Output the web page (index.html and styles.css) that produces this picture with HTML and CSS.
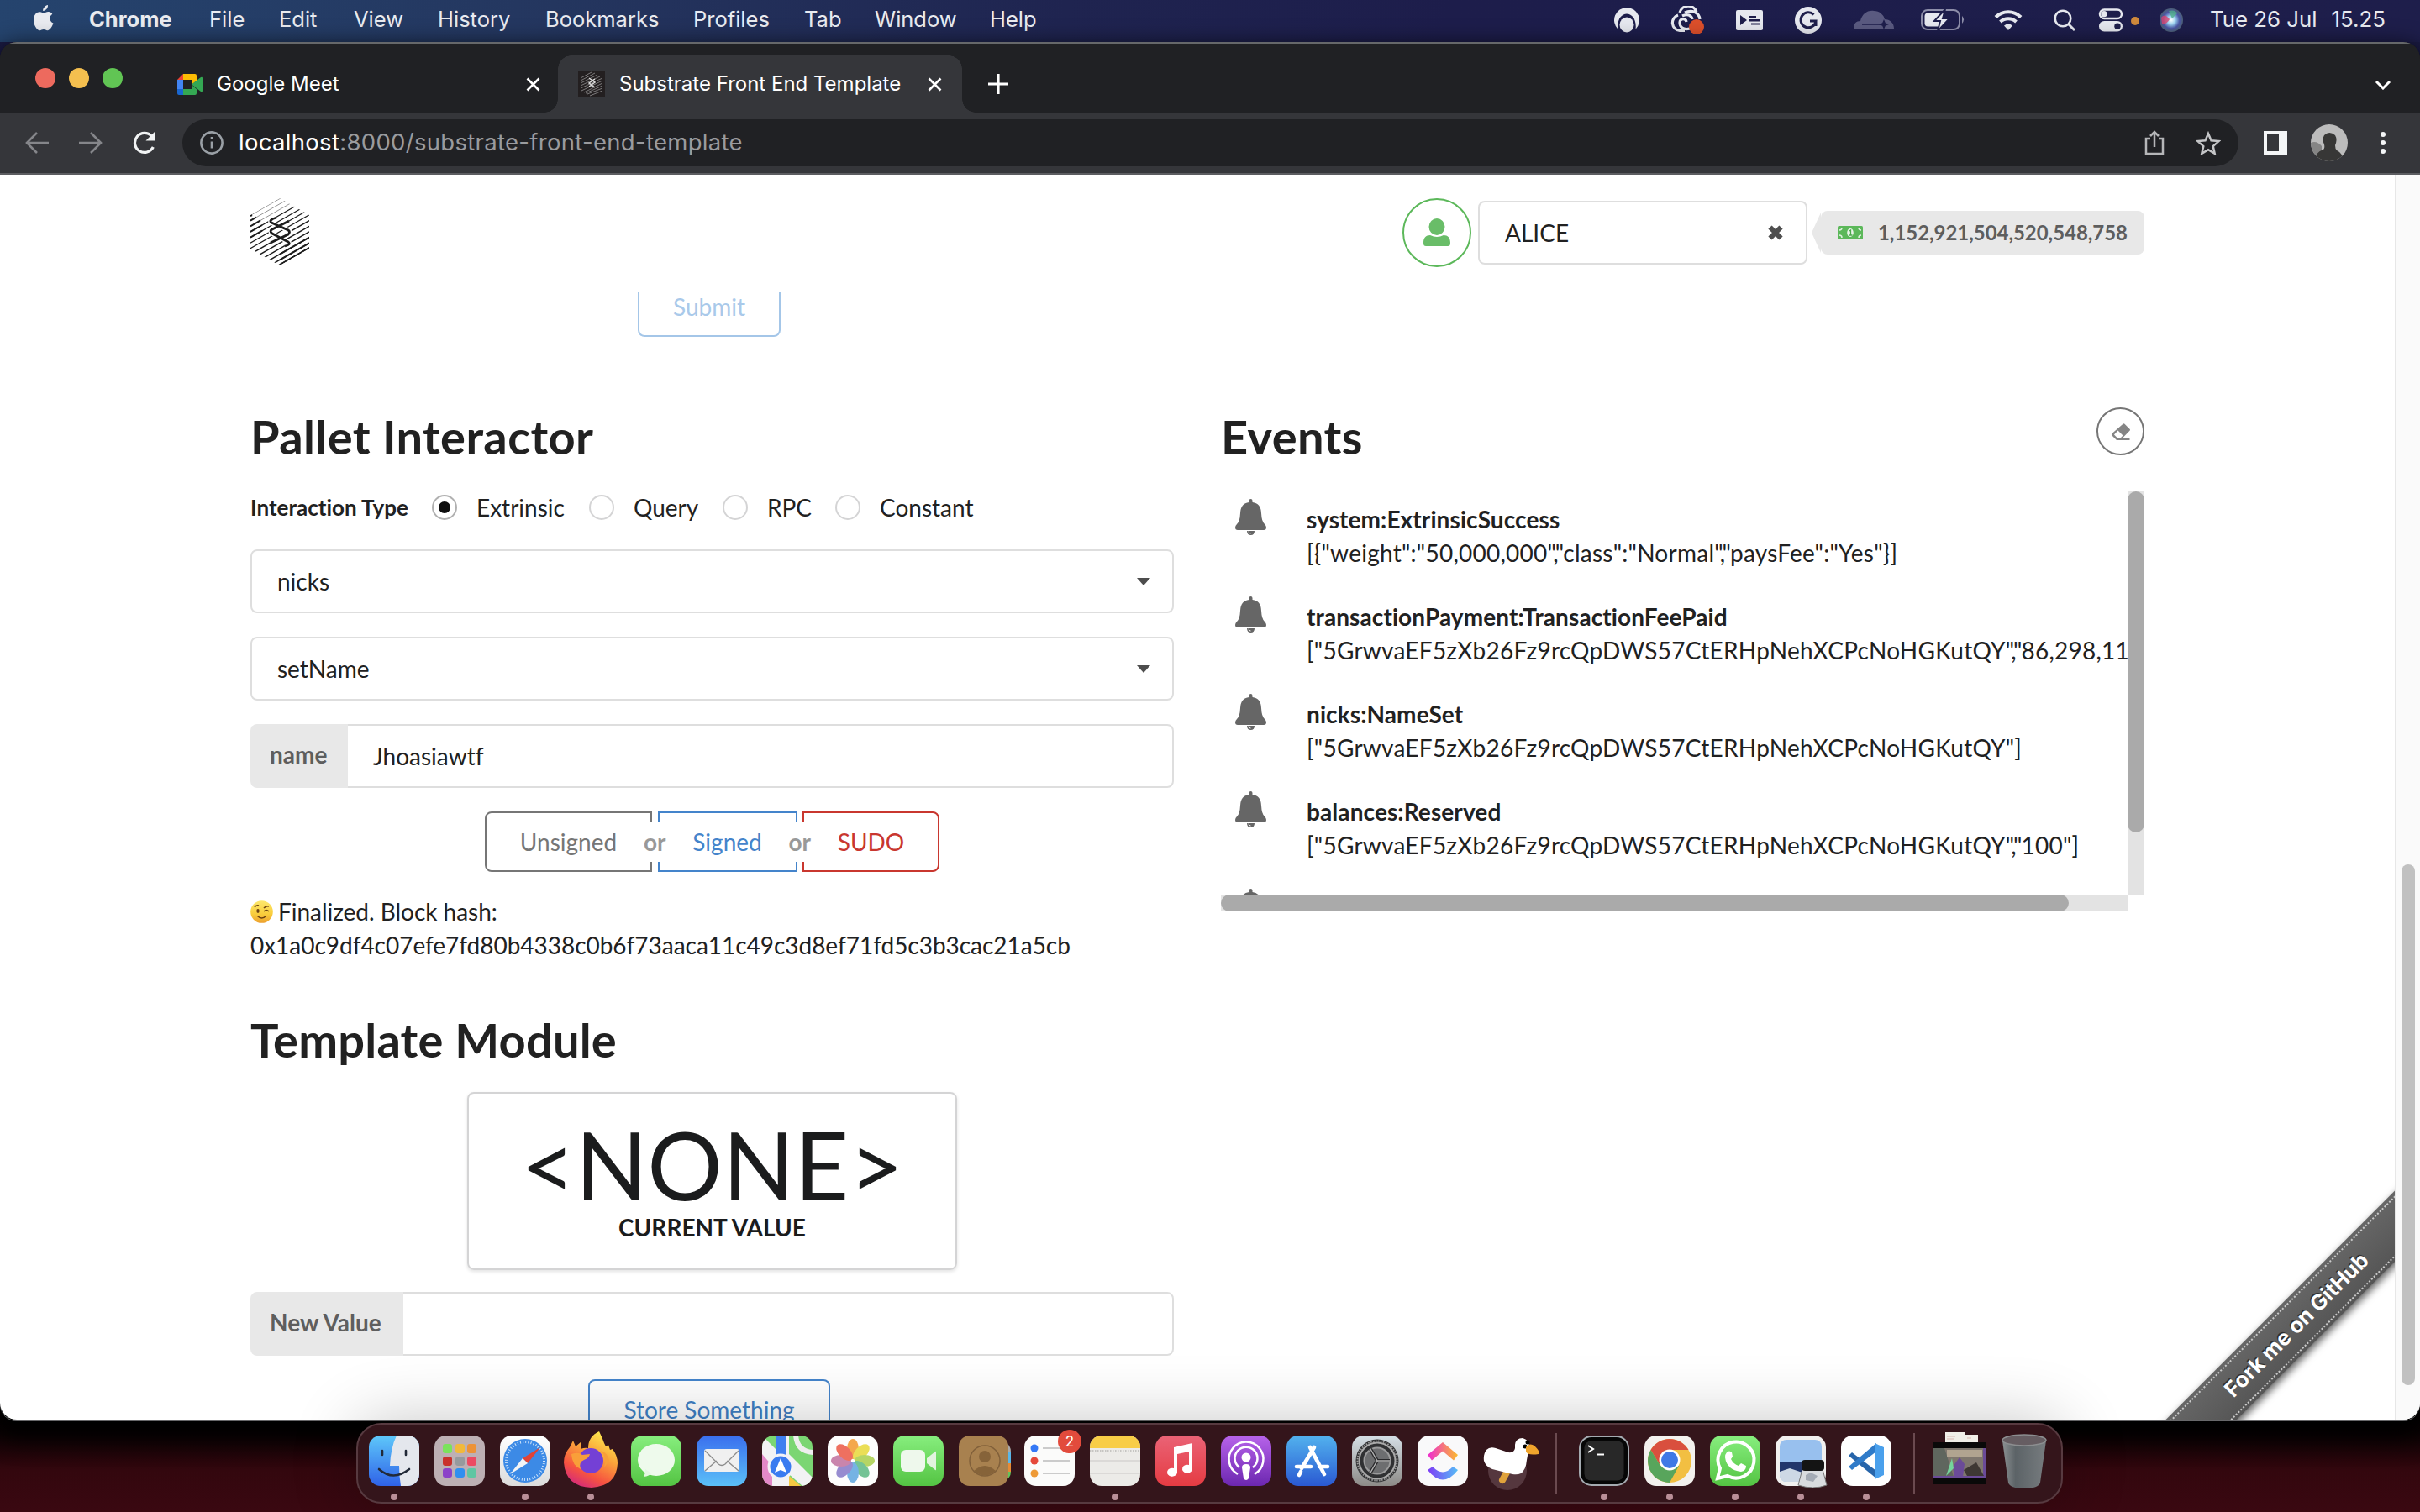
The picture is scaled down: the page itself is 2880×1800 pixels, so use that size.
FILE: index.html
```html
<!DOCTYPE html>
<html lang="en">
<head>
<meta charset="utf-8">
<title>Substrate Front End Template</title>
<link rel="stylesheet" href="styles.css">
</head>
<body>
<div class="desktop">
  <header class="menubar">
    <svg class="apple" viewBox="0 0 26 32"><path fill="#e9ebf0" d="M18 0c.3 3.400-2.500 7-5.800 6.900C11.800 3.700 15 .4 18 0zM23.300 10.700c-4.400 2.800-3.500 9 1.100 10.800-1.200 3.700-4 8.700-7 8.700-1.700 0-2.400-1.100-4.500-1.100s-2.900 1.100-4.500 1.100C4.800 30.200 1 23.500 1 17.500 1 11.400 4.900 8.200 8.500 8.200c2 0 3.600 1.300 4.800 1.300 1.200 0 3-1.500 5.500-1.400 1.800.1 3.500.9 4.500 2.600z"/></svg>
    <nav class="menus"><b>Chrome</b><span>File</span><span>Edit</span><span>View</span><span>History</span><span>Bookmarks</span><span>Profiles</span><span>Tab</span><span>Window</span><span>Help</span></nav>
    <div class="status">
      <svg width="30" height="30" viewBox="0 0 30 30"><path fill="#e6e8ef" d="M15 0A15 15 0 0 0 4.500 25.700C3 14 9 7.500 15 7.500S27 14 25.500 25.700A15 15 0 0 0 15 0z"/><ellipse cx="15" cy="20.500" rx="8.500" ry="9" fill="#e6e8ef"/></svg>
      <svg width="42" height="34" viewBox="0 0 42 34"><g fill="none" stroke="#e6e8ef" stroke-width="3.200"><path d="M18 29.500H12a9.500 9.500 0 0 1-2-18.500M12 8a10.500 10.500 0 0 1 20-1M24 27c-8 2-12-2-12-7s7-6 8-1M18 8c9-4 17 0 18 8"/><path d="M15 12c6-3 11-1 12 4"/></g><circle cx="32" cy="25" r="9" fill="#dc4f2b"/></svg>
      <svg width="32" height="24" viewBox="0 0 32 24"><rect width="32" height="24" rx="2" fill="#e6e8ef"/><path fill="#1e1e4b" d="M5 6l8 6-8 6zM16 7h8v2h-8zM16 11h12v2.500H16zM18 15.500h10v2H18z"/></svg>
      <svg width="32" height="32" viewBox="0 0 32 32"><circle cx="16" cy="16" r="16" fill="#e6e8ef"/><path d="M22.500 9.500A9 9 0 1 0 25 17h-7M25 16v7" fill="none" stroke="#1e1e4b" stroke-width="3"/></svg>
      <svg width="48" height="24" viewBox="0 0 48 24"><path fill="#5a5a80" d="M0 22c0-6 3-9 8-9C10 5 16 0 24 1c7 0 12 5 13 10 6 0 11 4 11 11z"/><path d="M10 17h24" stroke="#1e1e4b" stroke-width="1.500"/><path fill="#1e1e4b" d="M36 11l1.800 4.200L42 17l-4.200 1.800L36 23l-1.800-4.200L30 17l4.200-1.800z"/></svg>
      <svg width="52" height="26" viewBox="0 0 52 26"><rect x="1" y="1" width="45" height="23" rx="7" fill="none" stroke="#8d8ea9" stroke-width="2"/><rect x="4.500" y="4.500" width="20" height="16" rx="4" fill="#e6e8ef"/><path d="M29 0L16 14h7l-3 12 14-15h-8z" fill="#e6e8ef" stroke="#1e1e4b" stroke-width="2"/><path d="M49 8q4 4 0 9z" fill="#8d8ea9"/></svg>
      <svg width="34" height="26" viewBox="0 0 34 26"><g fill="none" stroke="#e6e8ef" stroke-width="4"><path d="M2 9.500a21 21 0 0 1 30 0M7.500 15a14 14 0 0 1 19 0"/></g><path d="M17 25l-5-5.500q5-4 10 0z" fill="#e6e8ef"/></svg>
      <svg width="26" height="26" viewBox="0 0 26 26"><circle cx="11" cy="11" r="9.300" fill="none" stroke="#e6e8ef" stroke-width="2.600"/><path d="M17.500 17.500L25 25" stroke="#e6e8ef" stroke-width="3"/></svg>
      <svg width="64" height="28" viewBox="0 0 64 28"><rect x="13" y="1.500" width="26" height="10.500" rx="5.200" fill="none" stroke="#e6e8ef" stroke-width="2.500"/><circle cx="18" cy="6.700" r="3.600" fill="#e6e8ef"/><rect x="12" y="15" width="28" height="12.500" rx="6.200" fill="#e6e8ef"/><circle cx="34" cy="21.200" r="3.700" fill="#1e1e4b"/><circle cx="55" cy="15" r="5" fill="#d08a3c"/></svg>
      <svg width="28" height="28" viewBox="0 0 28 28"><defs><radialGradient id="siri"><stop offset="0" stop-color="#fff"/><stop offset=".35" stop-color="#9cd3f1"/><stop offset=".7" stop-color="#4b56a5"/><stop offset="1" stop-color="#4c6075"/></radialGradient></defs><circle cx="14" cy="14" r="14" fill="url(#siri)"/><path d="M2 11Q6 5 12 13Q8 20 3 18z" fill="#d8456f" opacity=".8"/><path d="M11 3q8-2 10 3l-6 6z" fill="#4fae88" opacity=".8"/></svg>
    </div>
    <div class="clock"><span>Tue 26 Jul</span><span>15.25</span></div>
  </header>

  <main class="window">
    <div class="tabstrip">
      <div class="lights"><i class="red"></i><i class="amber"></i><i class="green"></i></div>
      <div class="tab tab-meet">
        <svg width="30" height="25" viewBox="0 0 30 25"><path fill="#4285f4" d="M0 7h7v11H0z"/><path fill="#ea4335" d="M0 7l7-7v7z"/><path fill="#fbbc04" d="M7 0h14q2 0 2 2v6l-6 5V7H7z"/><path fill="#34a853" d="M7 18h10v-5l6 5v5q0 2-2 2H7z"/><path fill="#1967d2" d="M0 18h7v7H2q-2 0-2-2z"/><path fill="#34a853" d="M17 12.500L28 4q2-1 2 1v15q0 2-2 1z"/></svg>
        <span class="tab-title">Google Meet</span>
        <svg class="close" width="17" height="17" viewBox="0 0 17 17"><path d="M1.500 1.500l14 14m0-14l-14 14" stroke="#fff" stroke-width="2.600"/></svg>
      </div>
      <div class="tab tab-active">
        <svg width="32" height="32" viewBox="0 0 32 32"><rect width="32" height="32" fill="#231f20"/><path stroke="#7d7b7c" stroke-width="1" d="M3 9l13-7M3 12L20 3M3 15L23 5M3 18L26 7M3 21L29 9M4 24l25-12M7 26l22-11M9 27l20-9M11 28l18-7M14 30l15-6"/><path d="M13 9l7 5-7 5m7-9l-7 5 7 5" fill="none" stroke="#ddd" stroke-width="1.500"/></svg>
        <span class="tab-title">Substrate Front End Template</span>
        <svg class="close" width="17" height="17" viewBox="0 0 17 17"><path d="M1.500 1.500l14 14m0-14l-14 14" stroke="#fff" stroke-width="2.600"/></svg>
      </div>
      <svg class="plus" width="24" height="24" viewBox="0 0 24 24"><path d="M12 0v24M0 12h24" stroke="#fff" stroke-width="3.200"/></svg>
      <svg class="chevron" width="20" height="12" viewBox="0 0 20 12"><path d="M2 2l8 8 8-8" fill="none" stroke="#fff" stroke-width="3"/></svg>
    </div>
    <div class="toolbar">
      <div class="navbtns">
        <svg width="28" height="26" viewBox="0 0 28 26"><path d="M14 1L2 13l12 12M2 13h26" fill="none" stroke="#85868a" stroke-width="2.600"/></svg>
        <svg width="28" height="26" viewBox="0 0 28 26"><path d="M14 1l12 12-12 12M26 13H0" fill="none" stroke="#85868a" stroke-width="2.600"/></svg>
        <svg width="28" height="28" viewBox="0 0 28 28"><path d="M24.300 19A11.500 11.500 0 1 1 22.500 6.200" fill="none" stroke="#f1f3f4" stroke-width="3.200"/><path d="M27 0v11.500H15.500z" fill="#f1f3f4"/></svg>
      </div>
      <div class="omnibox">
        <svg width="28" height="28" viewBox="0 0 28 28"><circle cx="14" cy="14" r="12.600" fill="none" stroke="#9aa0a6" stroke-width="2.600"/><path d="M14 12.500v8M14 7v3" stroke="#9aa0a6" stroke-width="2.600"/></svg>
        <span class="url"><em>localhost</em>:8000/substrate-front-end-template</span>
        <svg width="24" height="30" viewBox="0 0 24 30"><path d="M7 10H2v18h20V10h-5M12 20V2M7 7l5-5 5 5" fill="none" stroke="#b5b6b8" stroke-width="2.500"/></svg>
        <svg class="star" width="30" height="29" viewBox="0 0 30 29"><path d="M15 3l3.500 8.300 9 .8-6.800 6 2 8.700L15 22.200l-7.700 4.600 2-8.700-6.800-6 9-.8z" fill="none" stroke="#c4c5c7" stroke-width="2.500"/></svg>
      </div>
      <svg class="sidepanel" width="28" height="28" viewBox="0 0 28 28"><path fill="#f4f6f7" fill-rule="evenodd" d="M0 0h28v28H0zM4 4v20h14V4z"/></svg>
      <svg class="profile" width="44" height="44" viewBox="0 0 44 44"><defs><clipPath id="pc"><circle cx="22" cy="22" r="22"/></clipPath></defs><g clip-path="url(#pc)"><path fill="#bcbcbc" d="M0 0h44v44H0z"/><path fill="#858585" d="M0 22q7-3 13 4v18H0z"/><path fill="#373736" d="M5 44q0-11 10-14 2-2 1-6-3-6 0-11 6-6 13 0 3 5 0 12 0 4 2 6 7 3 8 13z"/></g></svg>
      <svg class="kebab" width="6" height="26" viewBox="0 0 6 26"><g fill="#f4f6f7"><circle cx="3" cy="3" r="3"/><circle cx="3" cy="13" r="3"/><circle cx="3" cy="23" r="3"/></g></svg>
    </div>

    <div class="viewport">
      <div class="page">
        <div class="topnav">
          <svg class="logo" width="70" height="80" viewBox="0 0 70 80"><defs><clipPath id="hex"><path d="M35 0l35 20v40L35 80 0 60V20z"/></clipPath></defs><g clip-path="url(#hex)" stroke="#1d1d1d" fill="none"><path stroke-width=".8" opacity=".6" d="M0 20.500l70-40M0 26.700l70-40M0 33.300l70-40"/><path stroke-width="1.200" d="M0 40l70-40M0 46.700l70-40M0 53.300l70-40M0 59.800l70-40"/><path stroke-width="1.500" d="M0 66.600l70-40M0 73.300l70-40M0 80l70-40M0 86.600l70-40M0 93.300l70-40M0 99l70-40"/><path stroke-width="2" d="M0 21l2-1M0 26.700l7-4M0 33.300l12-7M0 40l14-8M35 66.700l35-20M35 73.300l35-20M35 79l35-20M0 46.700l14-8"/></g><path d="M31 23q-10 3-6 6l20 9q3 2 0 5L24 53M46 27L26 37q-4 2 0 5l19 10q4 3-4 5" fill="none" stroke="#fff" stroke-width="5.500"/><path d="M31 23q-10 3-6 6l20 9q3 2 0 5L24 53M46 27L26 37q-4 2 0 5l19 10q4 3-4 5" fill="none" stroke="#1d1d1d" stroke-width="2.800"/></svg>
          <div class="account">
            <div class="avatar"><svg width="34" height="34" viewBox="0 0 34 34"><ellipse cx="17" cy="10" rx="9.500" ry="10" fill="#69bd68"/><path fill="#69bd68" d="M1 29c0-6 3-9 8-9q8 4 16 0c5 0 8 3 8 9 0 3-1 4-3 4H4c-2 0-3-1-3-4z"/></svg></div>
            <div class="select alice"><span>ALICE</span><svg width="20" height="20" viewBox="0 0 20 20"><path d="M3.500 3.500l13 13m0-13l-13 13" stroke="#4f4f4f" stroke-width="6"/></svg></div>
            <div class="pointer"></div>
            <div class="balance"><svg width="30" height="16" viewBox="0 0 30 16"><rect width="30" height="16" rx="1.500" fill="#5cb85a"/><path d="M2 5q3 0 3-3M25 2q0 3 3 3M2 11q3 0 3 3M25 14q0-3 3-3" fill="none" stroke="#dff0df" stroke-width="1.500"/><ellipse cx="15" cy="8" rx="3.800" ry="5" fill="#e8f4e8"/><path d="M14 6l1.500-1v6M13.500 11h4" stroke="#4aa84a" stroke-width="1.300" fill="none"/></svg><span>1,152,921,504,520,548,758</span></div>
          </div>
        </div>
        <div class="content">
          <section class="left">
            <div class="btn submit">Submit</div>
            <h1>Pallet Interactor</h1>
            <div class="radios"><b>Interaction Type</b>
              <label class="on"><i></i>Extrinsic</label><label class="r2"><i></i>Query</label><label class="r3"><i></i>RPC</label><label class="r4"><i></i>Constant</label></div>
            <div class="select"><span>nicks</span><svg width="16" height="9" viewBox="0 0 16 9"><path d="M0 0h16L8 9z" fill="#4d4d4d"/></svg></div>
            <div class="select"><span>setName</span><svg width="16" height="9" viewBox="0 0 16 9"><path d="M0 0h16L8 9z" fill="#4d4d4d"/></svg></div>
            <div class="field"><div class="field-label name-label">name</div><div class="field-value">Jhoasiawtf</div></div>
            <div class="actions"><div class="act unsigned">Unsigned</div><div class="or"><span>or</span></div><div class="act signed">Signed</div><div class="or"><span>or</span></div><div class="act sudo">SUDO</div></div>
            <div class="result"><div class="line"><svg width="27" height="27" viewBox="0 0 27 27"><defs><linearGradient id="em" x2="0" y2="1"><stop offset="0" stop-color="#fde86d"/><stop offset=".6" stop-color="#f9cd3c"/><stop offset="1" stop-color="#ec9f2d"/></linearGradient></defs><circle cx="13.500" cy="13.500" r="13.300" fill="url(#em)"/><ellipse cx="9" cy="12.500" rx="1.700" ry="2.400" fill="#6b4212"/><path d="M5 8q2-3 5-2M16 13q3-3 6 0M16 9q3-3 6-2M8.500 18.500q5 5 10 0" fill="none" stroke="#6b4212" stroke-width="1.600"/></svg><span>Finalized. Block hash:</span></div><div class="line">0x1a0c9df4c07efe7fd80b4338c0b6f73aaca11c49c3d8ef71fd5c3b3cac21a5cb</div></div>
            <h1 class="template">Template Module</h1>
            <div class="card"><div class="value">&lt;NONE&gt;</div><div class="caption">CURRENT VALUE</div></div>
            <div class="field"><div class="field-label new-label">New Value</div><div class="field-value"></div></div>
            <div class="btn store">Store Something</div>
          </section>
          <section class="right">
            <div class="events-head"><h1>Events</h1><div class="erase"><svg width="24" height="20" viewBox="0 0 24 20"><path fill="#858585" d="M14.500.8q1-1 2 0l6 6q1 1 0 2L14 17.500h8.500V20H7l-5.500-5.500q-1.200-1.200 0-2.500z"/><path fill="#fff" d="M8.500 8.500l6 6-3 3H8l-4-4z"/></svg></div></div>
            <div class="feed">
              <div class="feed-list">
                <div class="event"><svg class="bell" viewBox="0 0 37 43"><path d="M18.500 0q2 0 2 2v2q10 1 10.500 13 .5 10 4 13 2 2 2 4 0 3-3 3H3q-3 0-3-3 0-2 2-4 3.500-3 4-13Q6.500 5 16.500 4V2q0-2 2-2zM14 38h9q0 5-4.500 5T14 38z" fill="#666"/><path d="M16 38.500q0 2.500 2.500 2.500" stroke="#fff" fill="none"/></svg><div><b>system:ExtrinsicSuccess</b><p>[{"weight":"50,000,000<span class="tight">","</span>class":"Normal<span class="tight">","</span>paysFee":"Yes"}]</p></div></div>
                <div class="event"><svg class="bell" viewBox="0 0 37 43"><path d="M18.500 0q2 0 2 2v2q10 1 10.500 13 .5 10 4 13 2 2 2 4 0 3-3 3H3q-3 0-3-3 0-2 2-4 3.500-3 4-13Q6.500 5 16.500 4V2q0-2 2-2zM14 38h9q0 5-4.500 5T14 38z" fill="#666"/><path d="M16 38.500q0 2.500 2.500 2.500" stroke="#fff" fill="none"/></svg><div><b>transactionPayment:TransactionFeePaid</b><p>["5GrwvaEF5zXb26Fz9rcQpDWS57CtERHpNehXCPcNoHGKutQY<span class="tight">","</span>86,298,11</p></div></div>
                <div class="event"><svg class="bell" viewBox="0 0 37 43"><path d="M18.500 0q2 0 2 2v2q10 1 10.500 13 .5 10 4 13 2 2 2 4 0 3-3 3H3q-3 0-3-3 0-2 2-4 3.500-3 4-13Q6.500 5 16.500 4V2q0-2 2-2zM14 38h9q0 5-4.500 5T14 38z" fill="#666"/><path d="M16 38.500q0 2.500 2.500 2.500" stroke="#fff" fill="none"/></svg><div><b>nicks:NameSet</b><p>["5GrwvaEF5zXb26Fz9rcQpDWS57CtERHpNehXCPcNoHGKutQY"]</p></div></div>
                <div class="event"><svg class="bell" viewBox="0 0 37 43"><path d="M18.500 0q2 0 2 2v2q10 1 10.500 13 .5 10 4 13 2 2 2 4 0 3-3 3H3q-3 0-3-3 0-2 2-4 3.500-3 4-13Q6.500 5 16.500 4V2q0-2 2-2zM14 38h9q0 5-4.500 5T14 38z" fill="#666"/><path d="M16 38.500q0 2.500 2.500 2.500" stroke="#fff" fill="none"/></svg><div><b>balances:Reserved</b><p>["5GrwvaEF5zXb26Fz9rcQpDWS57CtERHpNehXCPcNoHGKutQY<span class="tight">","</span>100"]</p></div></div>
                <div class="event"><svg class="bell" viewBox="0 0 37 43"><path d="M18.500 0q2 0 2 2v2q10 1 10.500 13H6Q6.500 5 16.500 4V2q0-2 2-2z" fill="#666"/></svg></div>
              </div>
              <div class="vbar"><i></i></div>
              <div class="hbar"><i></i></div>
            </div>
          </section>
        </div>
        <div class="ribbon"><span>Fork me on GitHub</span></div>
      </div>
      <div class="pagebar"><i></i></div>
    </div>
  </main>

  <footer class="dock">
    <div class="app run"><svg viewBox="0 0 60 60"><defs><linearGradient id="fb" x2="0" y2="1"><stop offset="0" stop-color="#5ec8fa"/><stop offset="1" stop-color="#2f62e8"/></linearGradient><linearGradient id="wg" x2="0" y2="1"><stop offset="0" stop-color="#fff"/><stop offset="1" stop-color="#dcdcdc"/></linearGradient><clipPath id="sq"><rect width="60" height="60" rx="14"/></clipPath></defs><g clip-path="url(#sq)"><path fill="url(#fb)" d="M0 0h60v60H0z"/><path fill="#e4e7ed" d="M33 0h27v60H38q-2-12-2-24h-11Q26 14 33 0z"/></g><path d="M16 18v5M44 18v5M12 40q17 15 36 0" stroke="#222a38" stroke-width="2.600" fill="none" stroke-linecap="round"/></svg></div>
    <div class="app"><svg viewBox="0 0 60 60"><rect width="60" height="60" rx="14" fill="#bdb0b4"/><rect x="10" y="10" width="11" height="11" rx="3" fill="#7be35b"/><rect x="25" y="10" width="11" height="11" rx="3" fill="#f2b93b"/><rect x="39" y="10" width="11" height="11" rx="3" fill="#ed9237"/><rect x="10" y="25" width="11" height="11" rx="3" fill="#c9312b"/><rect x="25" y="25" width="11" height="11" rx="3" fill="#969a9d"/><rect x="39" y="25" width="11" height="11" rx="3" fill="#ec4a62"/><rect x="10" y="39" width="11" height="11" rx="3" fill="#8c42c8"/><rect x="25" y="39" width="11" height="11" rx="3" fill="#2f8ff0"/><rect x="39" y="39" width="11" height="11" rx="3" fill="#5fc6a2"/></svg></div>
    <div class="app run"><svg viewBox="0 0 60 60"><rect width="60" height="60" rx="14" fill="url(#wg)"/><circle cx="30" cy="30" r="26" fill="#3c8ae6"/><circle cx="30" cy="30" r="22.500" fill="none" stroke="#cfe4fa" stroke-width="3" stroke-dasharray="1 2.200"/><path fill="#e04337" d="M48 14L27 27l6 6z"/><path fill="#f3f4f6" d="M12 46l21-13-6-6z"/></svg></div>
    <div class="app run"><svg viewBox="0 0 60 60"><defs><linearGradient id="ff" x1=".8" y1="0" x2=".3" y2="1"><stop offset="0" stop-color="#fdf251"/><stop offset=".4" stop-color="#fba33a"/><stop offset=".75" stop-color="#f65340"/><stop offset="1" stop-color="#d52a7a"/></linearGradient></defs><path fill="url(#ff)" d="M40-5q4 8 6 14l2 4 3-2 2 6 3-1q6 8 6 17-1 27-31 29Q0 61-2 32-2 22 5 14L9 6l3 7 6-5v8q5-2 9-1 0-14 13-20z"/><circle cx="30" cy="30" r="15" fill="#7440d5"/><path fill="#f99f39" d="M7 22q9-3 13 1l9-1q-1 5-7 7-7 3-4 11-10-4-11-18zM42 18q8 8 4 20l6-8q-2-10-10-12z"/></svg></div>
    <div class="app"><svg viewBox="0 0 60 60"><defs><linearGradient id="gr" x2="0" y2="1"><stop offset="0" stop-color="#87ee7e"/><stop offset="1" stop-color="#54c443"/></linearGradient></defs><rect width="60" height="60" rx="14" fill="url(#gr)"/><ellipse cx="30" cy="29" rx="22" ry="19" fill="#eefaec"/><path fill="#e5f6e2" d="M17 40q0 6-2 9 7-1 9-4z"/></svg></div>
    <div class="app"><svg viewBox="0 0 60 60"><defs><linearGradient id="ml" x2="0" y2="1"><stop offset="0" stop-color="#3a6fee"/><stop offset="1" stop-color="#5bc0f8"/></linearGradient></defs><rect width="60" height="60" rx="14" fill="url(#ml)"/><rect x="9" y="16" width="42" height="27" rx="3" fill="#f0f0f0"/><path d="M10 18l16 16q4 3 8 0l16-16M10 42l14-12M50 42L36 30" stroke="#8c8c8c" stroke-width="1.400" fill="none"/></svg></div>
    <div class="app"><svg viewBox="0 0 60 60"><g clip-path="url(#sq)"><path fill="#7bd673" d="M0 0h60v60H0z"/><path fill="#e289c8" d="M0 14l16 20v26H0z"/><path fill="#f2f2f4" d="M0 0l16 16V0h16v22l28 28v10H48L32 46v14H12V36L0 22z"/><path fill="#f5c944" d="M32 60V48l14 12z"/><path fill="#3f7ff0" d="M17 0h12v30H17z"/><path d="M40 0q2 20 22 20" fill="none" stroke="#eee" stroke-width="6"/></g><circle cx="22" cy="37" r="14" fill="#3a7bf0" stroke="#f2f2f6" stroke-width="3"/><path fill="#fff" d="M22 27l7 17-7-3-7 3z"/></svg></div>
    <div class="app"><svg viewBox="0 0 60 60"><rect width="60" height="60" rx="14" fill="#fdfdfd"/><g opacity=".85"><ellipse cx="30" cy="16" rx="7" ry="12" fill="#f39a2f"/><ellipse cx="30" cy="16" rx="7" ry="12" fill="#e8d93a" transform="rotate(45 30 30)"/><ellipse cx="30" cy="16" rx="7" ry="12" fill="#a9cf4b" transform="rotate(90 30 30)"/><ellipse cx="30" cy="16" rx="7" ry="12" fill="#5dba85" transform="rotate(135 30 30)"/><ellipse cx="30" cy="16" rx="7" ry="12" fill="#5ea7e0" transform="rotate(180 30 30)"/><ellipse cx="30" cy="16" rx="7" ry="12" fill="#8579c9" transform="rotate(225 30 30)"/><ellipse cx="30" cy="16" rx="7" ry="12" fill="#c1719f" transform="rotate(270 30 30)"/><ellipse cx="30" cy="16" rx="7" ry="12" fill="#ec5845" transform="rotate(315 30 30)"/></g></svg></div>
    <div class="app"><svg viewBox="0 0 60 60"><rect width="60" height="60" rx="14" fill="url(#gr)"/><rect x="9" y="17" width="29" height="26" rx="6" fill="#eef8ec"/><path fill="#e2f3df" d="M40 27l10-8q1-1 1 1v20q0 2-1 1l-10-8z"/></svg></div>
    <div class="app"><svg viewBox="0 0 60 60"><path fill="#5ab7e8" d="M54 20h8v13h-8z"/><path fill="#e88b35" d="M54 33h8v10h-8z"/><path fill="#63c55b" d="M54 43h8q0 8-8 10z"/><path fill="#aaa" d="M54 8q8 2 8 12h-8z"/><rect width="59" height="60" rx="13" fill="#a8814f"/><circle cx="31" cy="30" r="18" fill="none" stroke="#81603a" stroke-width="1.500"/><circle cx="31" cy="25" r="7" fill="#866339"/><path d="M18 42q13-12 26 0-13 11-26 0z" fill="#866339"/></svg></div>
    <div class="app"><svg viewBox="0 0 60 60"><rect width="60" height="60" rx="14" fill="#fbfbfa"/><path d="M22 15h32M22 30h32M22 45h32" stroke="#bcbcbc" stroke-width="1.500"/><circle cx="12" cy="15" r="4.500" fill="#3478f6"/><circle cx="12" cy="30" r="4.500" fill="#e5483a"/><circle cx="12" cy="45" r="4.500" fill="#ee9a37"/></svg><span class="badge">2</span></div>
    <div class="app run"><svg viewBox="0 0 60 60"><g clip-path="url(#sq)"><path fill="#ecebe8" d="M0 0h60v60H0z"/><path fill="#f8cd46" d="M0 0h60v15H0z"/></g><path d="M0 18h60" stroke="#b9b9b5" stroke-width="1.500" stroke-dasharray="1.500 1.500"/><path d="M0 30h60M0 45h60" stroke="#d5d4d1" stroke-width="1.500"/></svg></div>
    <div class="app"><svg viewBox="0 0 60 60"><defs><linearGradient id="mu" x2="0" y2="1"><stop offset="0" stop-color="#ea6376"/><stop offset="1" stop-color="#e53b42"/></linearGradient></defs><rect width="60" height="60" rx="14" fill="url(#mu)"/><path d="M22 14l22-5v31a6 5 0 1 1-4-5V19l-14 3v22a6 5 0 1 1-4-5z" fill="#fff"/></svg></div>
    <div class="app"><svg viewBox="0 0 60 60"><defs><linearGradient id="po" x2="0" y2="1"><stop offset="0" stop-color="#b763ea"/><stop offset="1" stop-color="#6c27b0"/></linearGradient></defs><rect width="60" height="60" rx="14" fill="url(#po)"/><g fill="none" stroke="#fff" stroke-width="2.500"><path d="M20 46a20.500 20.500 0 1 1 20 0M22 38a13.500 13.500 0 1 1 16 0"/></g><circle cx="30" cy="26" r="5.500" fill="#fff"/><path fill="#fff" d="M25 38q0-4 5-4t5 4l-2 13q-3 4-6 0z"/></svg></div>
    <div class="app"><svg viewBox="0 0 60 60"><defs><linearGradient id="as" x2="0" y2="1"><stop offset="0" stop-color="#52b2ee"/><stop offset="1" stop-color="#2a59d2"/></linearGradient></defs><rect width="60" height="60" rx="14" fill="url(#as)"/><path d="M33 14L18 39M28 14l17 32M12 37h17M39 37h10M17 43l-2 4" stroke="#fff" stroke-width="4.600" stroke-linecap="round"/></svg></div>
    <div class="app"><svg viewBox="0 0 60 60"><defs><linearGradient id="st" x2="0" y2="1"><stop offset="0" stop-color="#d5dfe6"/><stop offset="1" stop-color="#8d8b88"/></linearGradient></defs><rect width="60" height="60" rx="14" fill="url(#st)"/><circle cx="30" cy="30" r="25.500" fill="#303133"/><circle cx="30" cy="30" r="21.500" fill="none" stroke="#aaa" stroke-width="2"/><circle cx="30" cy="30" r="23.500" fill="none" stroke="#999" stroke-width="2" stroke-dasharray="1.500 1.500"/><circle cx="30" cy="30" r="15.500" fill="#6d6e70" stroke="#9b9b9c" stroke-width="2"/><path d="M30 30h15M30 30l-8-14M30 30l-8 14" stroke="#29292b" stroke-width="4"/><path d="M30 30h15M30 30l-8-14M30 30l-8 14" stroke="#b1b1b2" stroke-width="1.500"/></svg></div>
    <div class="app"><svg viewBox="0 0 60 60"><defs><linearGradient id="c1"><stop offset="0" stop-color="#ee2bd2"/><stop offset="1" stop-color="#fbbc2d"/></linearGradient><linearGradient id="c2"><stop offset="0" stop-color="#7e3bf5"/><stop offset="1" stop-color="#55bef7"/></linearGradient></defs><rect width="60" height="60" rx="14" fill="#f9f9fa"/><path fill="url(#c1)" d="M30 8l18 15-5 6.500-13-11-13 11L12 23z"/><path fill="url(#c2)" d="M12 41l6-4q12 13 24 0l6 4q-18 23-36 0z"/></svg></div>
    <div class="app"><svg viewBox="0 0 60 60"><circle cx="29" cy="42" r="23" fill="#55373e"/><path d="M28 44l-5 9" stroke="#e0a23b" stroke-width="8" stroke-linecap="round"/><path fill="#fff" d="M1 30Q0 22 4 17q4-4 11-2l15 5q7 1 8-5V11q1-8 9-8 8 2 8 10l-3 16q-1 12-7 16-4 2-10 1L11 40Q3 37 1 30z"/><circle cx="53" cy="8" r="2.500"/><circle cx="50" cy="13" r="2.500"/><path fill="#f0a42c" d="M51 14q4-6 10-2 8 8 5 10-13 2-15-3z"/></svg></div>
    <div class="sep"></div>
    <div class="app run"><svg viewBox="0 0 60 60"><rect x="1" y="1" width="58" height="58" rx="14" fill="#060606" stroke="#a4aab0" stroke-width="2"/><rect x="6.500" y="6.500" width="47" height="47" rx="8" fill="#282828"/><path d="M11 12l6 4-6 4M21 22.500h9" stroke="#fff" stroke-width="2" fill="none"/></svg></div>
    <div class="app run"><svg viewBox="0 0 60 60"><rect width="60" height="60" rx="14" fill="#f3f1ee"/><circle cx="30" cy="30" r="26" fill="#f2bf42"/><path fill="#d94f3e" d="M7.500 17A26 26 0 0 1 52.500 17H30L19 36z"/><path fill="#58a55c" d="M7.500 17A26 26 0 0 0 30 56l11-20H19z"/><circle cx="30" cy="29" r="12.500" fill="#fff"/><circle cx="30" cy="29" r="10" fill="#3f78e6"/></svg></div>
    <div class="app run"><svg viewBox="0 0 60 60"><rect width="60" height="60" rx="14" fill="url(#gr)"/><path d="M9 51l3-12A21.500 21.500 0 1 1 21 48z" fill="none" stroke="#fff" stroke-width="4"/><path d="M20 20q3-3 6 0l1 5-2 3q3 6 9 8l3-3 6 3q0 6-6 7-17-2-19-17 0-4 2-6z" fill="#fff"/></svg></div>
    <div class="app run"><svg viewBox="0 0 60 60"><rect width="60" height="60" rx="14" fill="#f1f0ef"/><rect x="5" y="5" width="50" height="50" rx="8" fill="#98c0ee"/><path fill="#22366b" d="M5 32h50v12H5z"/><path fill="#cdd8e5" d="M5 43l12-4 18 6v10H13q-8 0-8-8z"/><path fill="#d9dcdf" stroke="#777" d="M32 40h24l5 19q-16 6-34 0z"/><rect x="31" y="29" width="27" height="13" rx="4" fill="#141414"/><path fill="#a4abb5" d="M36 47l6-3 8 4-5 7-9-2z"/></svg></div>
    <div class="app run"><svg viewBox="0 0 60 60"><rect width="60" height="60" rx="14" fill="#fff"/><path fill="#2765aa" d="M9 24l4-4 29 22v9L9 24z"/><path fill="#2f7bc9" d="M9 37l4 4 29-22V9z"/><path fill="#4aa0ec" d="M40 9l11 5v33l-11 5z"/></svg></div>
    <div class="sep"></div>
    <div class="app mini"><svg viewBox="0 0 63 62"><path fill="#f1efe8" d="M14 0h23v3h16v12H14z"/><path stroke="#d9b9b2" d="M16 5h10M16 8h8M40 7h5"/><path fill="#090909" d="M0 12h63v50H0z"/><path fill="#7f776e" d="M0 19h63v34H0z"/><path fill="#5f665e" d="M0 19h13l11 34H0z"/><path fill="#b1a490" d="M16 21h42v9H16z"/><path fill="#6b4b98" d="M23 41l8-11 6 8-2 15H25zM59 19h4v35H0v-2h59z"/><path fill="#75d49c" d="M15 52l7-21 2 12z"/><path fill="#3e3834" d="M36 45l15-9 9 16H40z"/></svg></div>
    <div class="app trash"><svg viewBox="0 0 54 66"><defs><linearGradient id="tr"><stop offset="0" stop-color="#8b9092"/><stop offset=".3" stop-color="#5c6367"/><stop offset="1" stop-color="#777c7f"/></linearGradient></defs><path fill="url(#tr)" d="M1 8l7 50q2 7 19 7t19-7l7-50z"/><ellipse cx="27" cy="7.500" rx="26" ry="6.500" fill="#665d62" stroke="#8c8e90" stroke-width="1.500"/></svg></div>
  </footer>
</div>
</body>
</html>
```
FILE: styles.css
```css
* { box-sizing: border-box; }
html, body { margin: 0; width: 2880px; height: 1800px; overflow: hidden; }
svg { display: block; flex: none; }
h1, p { margin: 0; }
i { font-style: normal; }

.desktop {
  width: 2880px; height: 1800px;
  display: flex; flex-direction: column;
  overflow: hidden;
  background: linear-gradient(#14142e 0, #1c1c48 60px, #050102 1690px, #0b0203 1706px, #33070e 1750px, #3a0811 1800px);
  font-family: Inter, "Liberation Sans", sans-serif;
}

/* menu bar */
.menubar {
  flex: 0 0 50px; height: 50px;
  display: flex; align-items: center;
  padding: 0 0 2px 39px;
  color: #e9ebf0; font-size: 25.500px;
  background: linear-gradient(100deg, #25446e 0, #24365f 650px, #1f2450 1250px, #1d1d4b 1700px, #1e1e4b 100%);
  white-space: pre;
}
.apple { width: 26px; height: 32px; margin-top: -4px; }
.menus { display: grid; grid-template-columns: 143px 83px 89px 100px 128px 176px 132px 84px 137px 80px; margin: -3px 0 0 41px; flex: none; }
.status { display: grid; grid-template-columns: 72px 72px 76px 64px 92px 72px 84px 50px 72px 60px; justify-items: center; align-items: center; margin-left: 642px; flex: none; }
.clock { display: flex; gap: 17px; margin: -3px 0 0 16px; font-size: 25.800px; }

/* browser chrome */
.window {
  flex: 0 0 1640px; height: 1640px;
  display: flex; flex-direction: column;
  border-radius: 20px; overflow: hidden;
  box-shadow: 0 1px 0 #000, 0 2px 0 #68686a, 0 4px 0 #000, 0 14px 30px 6px #000;
  background: #202124;
}
.tabstrip { flex: 0 0 84px; display: flex; background: #202124; border-top: 2px solid #66686a; padding-left: 42px; }
.lights { display: flex; gap: 16px; padding-top: 29px; width: 169px; }
.lights i { width: 24px; height: 24px; border-radius: 50%; }
.red { background: #ed6a5e; } .amber { background: #f4bf4f; } .green { background: #61c554; }
.tab { display: flex; align-items: center; height: 68px; margin-top: 14px; color: #fff; font-size: 24px; white-space: nowrap; }
.tab-title { margin-left: 17px; margin-top: -2px; }
.close { margin-left: auto; }
.tab-meet { width: 432px; }
.tab-active {
  width: 513px; margin-left: 5px; padding: 0 40px;
  background:
    radial-gradient(circle at 0 0, transparent 15.5px, #35363a 16px) left bottom / 16px 16px no-repeat,
    radial-gradient(circle at 100% 0, transparent 15.5px, #35363a 16px) right bottom / 16px 16px no-repeat,
    radial-gradient(circle at 16px 16px, #35363a 15.5px, transparent 16px) 16px 0 / 16px 16px no-repeat,
    radial-gradient(circle at 0 16px, #35363a 15.5px, transparent 16px) 481px 0 / 16px 16px no-repeat,
    linear-gradient(#35363a, #35363a) 32px 0 / 449px 16px no-repeat,
    linear-gradient(#35363a, #35363a) 16px 16px / 481px 52px no-repeat;
}
.plus { margin: 36px 0 0 15px; }
.chevron { margin: 43px 34px 0 auto; }
.toolbar { flex: 0 0 74px; display: flex; align-items: center; background: #35363a; border-bottom: 2px solid #5c5d61; padding-left: 30px; }
.navbtns { display: flex; align-items: center; gap: 36px; width: 187px; }
.omnibox { width: 2447px; height: 56px; border-radius: 28px; background: #202124; display: flex; align-items: center; padding: 0 21px; }
.url { color: #9a9b9e; font-size: 27.500px; letter-spacing: .3px; margin: -2px auto 0 18px; }
.url em { color: #fff; font-style: normal; }
.star { margin-left: 37px; }
.sidepanel { margin-left: 30px; }
.profile { margin-left: 28px; }
.kebab { margin-left: 39px; }

/* web page */
.viewport { flex: 1; display: flex; min-height: 0; background: #fff; }
.page { width: 2850px; position: relative; overflow: hidden; font: 28px/40px Lato, "Liberation Sans", sans-serif; font-variant-ligatures: none; color: #212121; }
.topnav { height: 140px; display: flex; justify-content: space-between; padding: 28px 298px 0 298px; }
.account { display: flex; align-items: center; height: 82px; }
.avatar { width: 82px; height: 82px; border: 2px solid #5cb85a; border-radius: 50%; display: flex; align-items: center; justify-content: center; }
.select { height: 76px; margin-bottom: 28px; border: 2px solid #dedede; border-radius: 8px; display: flex; align-items: center; justify-content: space-between; padding: 0 26px 0 30px; }
.alice { width: 392px; margin: 0 0 0 8px; }
.pointer { border: 11px solid transparent; border-right-color: #e8e8e8; border-left: 0; margin-left: 5px; border-width: 24px 11px 24px 0; }
.balance { width: 385px; height: 52px; border-radius: 8px; background: #e8e8e8; color: #5e5e5e; font-weight: 700; font-size: 24px; letter-spacing: -.05px; display: flex; align-items: center; gap: 18px; padding-left: 20px; white-space: nowrap; }
.content { display: grid; grid-template-columns: 1099px 1099px; column-gap: 56px; padding-left: 298px; height: 1342px; overflow: hidden; align-items: start; }
h1 { font-size: 56px; line-height: 72px; font-weight: 700; letter-spacing: .4px; }
.btn { display: flex; align-items: center; justify-content: center; height: 72px; border: 2px solid #4484cb; border-radius: 8px; color: #3f7fc4; }
.submit { width: 170px; margin: -19px 0 83px 461px; color: #a9c9ea; border-color: #a4c6e8; }
.radios { display: flex; align-items: center; height: 40px; margin: 28px 0 30px; }
.radios b { font-size: 26px; width: 216px; flex: none; }
.radios label { display: flex; align-items: center; gap: 23px; width: 187px; }
.radios .r2 { width: 159px; } .radios .r3 { width: 134px; } .radios .r4 { width: 170px; }
.radios i { width: 30px; height: 30px; flex: none; border: 2px solid #d4d4d5; border-radius: 50%; display: flex; align-items: center; justify-content: center; }
.radios .on i { border-color: #b0b0b0; }
.radios .on i::before { content: ""; width: 14px; height: 14px; border-radius: 50%; background: #0d0d0d; }
.field { display: flex; height: 76px; margin-bottom: 28px; }
.field-label { background: #e8e8e8; border-radius: 8px 0 0 8px; color: #5e5e5e; font-weight: 700; padding: 16px 0 0 23px; }
.name-label { width: 116px; } .new-label { width: 182px; }
.field-value { flex: 1; border: 2px solid #dedede; border-left: 0; border-radius: 0 8px 8px 0; padding: 16px 0 0 30px; }
.actions { display: flex; height: 72px; margin-left: 279px; }
.act { border: 2px solid #767676; display: flex; align-items: center; justify-content: center; color: #767676; flex: none; }
.unsigned { width: 199px; border-radius: 8px 0 0 8px; }
.signed { width: 166px; border-color: #4484cb; color: #4484cb; }
.sudo { width: 163px; border-color: #c9372f; color: #c9372f; border-radius: 0 8px 8px 0; }
.or { flex: 0 0 6.500px; min-width: 0; display: flex; align-items: center; justify-content: center; z-index: 1; }
.or span { flex: none; width: 40px; height: 48px; line-height: 48px; text-align: center; background: #fff; color: #999; font-weight: 700; }
.result { margin-top: 27px; }
.line { display: flex; align-items: center; gap: 6px; height: 40px; letter-spacing: -.03px; }
.template { margin-top: 57px; letter-spacing: .2px; }
.card { width: 583px; height: 212px; margin: 26px auto; border: 2px solid #d4d4d5; border-radius: 8px; box-shadow: 0 2px 4px #e3e3e3; text-align: center; padding-top: 28px; color: #1b1c1d; }
.value { font-size: 112px; line-height: 112px; }
.caption { font-weight: 700; line-height: 38px; }
.store { width: 288px; margin-left: 402px; }

.right { padding-top: 136px; }
.events-head { display: flex; justify-content: space-between; height: 101px; }
.erase { width: 57px; height: 57px; margin-top: 1px; border: 2px solid #767676; border-radius: 50%; display: flex; align-items: center; justify-content: center; }
.feed { display: grid; grid-template: 480px 20px / 1079px 20px; }
.feed-list { overflow: hidden; padding-left: 17px; min-width: 0; }
.event { display: flex; height: 116px; padding-top: 9px; white-space: nowrap; }
.bell { width: 37px; height: 43px; margin-right: 48px; }
.event div { padding-top: 4px; }
.event b { display: block; letter-spacing: .1px; }
.event p { letter-spacing: .25px; }
.tight { letter-spacing: -.9px; }
.vbar, .hbar { background: #e3e3e3; }
.vbar i, .hbar i { display: block; background: #aaa; border-radius: 10px; }
.vbar i { height: 406px; } .hbar i { width: 1009px; height: 20px; }

.ribbon {
  position: absolute; left: 2483px; top: 1339px; width: 500px; height: 60px;
  transform: rotate(-45deg); background: linear-gradient(#666, #555);
  box-shadow: 0 4px 10px rgba(0,0,0,.6);
  color: #fff; font: 700 25.500px/48px Inter, sans-serif; text-align: center;
  text-shadow: 0 -2px rgba(0,0,0,.5); padding: 4px 0;
}
.ribbon span { display: block; height: 52px; border: 2px dotted #c9c9c9; border-width: 2px 0; }
.pagebar { flex: 1; background: #fafafa; border-left: 2px solid #e7e7e7; padding: 821px 0 0 6px; }
.pagebar i { display: block; width: 16px; height: 620px; border-radius: 8px; background: #c1c1c1; }

/* dock */
.dock {
  position: relative; display: flex; gap: 18px;
  width: 2031px; height: 96px; margin: 4px 0 0 424px; padding: 13px 0 0 13px;
  background: #34151b; border: 2px solid #573a40; border-radius: 30px;
  box-shadow: 0 0 80px rgba(0,0,0,.24);
}
.app { flex: 0 0 60px; display: flex; flex-direction: column; align-items: center; position: relative; }
.app svg { width: 60px; height: 60px; overflow: visible; }
.run::after { content: ""; width: 8px; height: 8px; margin-top: 9px; border-radius: 50%; background: #b98f98; }
.badge { position: absolute; left: 40px; top: -7px; width: 28px; height: 28px; border-radius: 50%; background: #e24b3c; color: #fff; font-size: 17px; line-height: 28px; text-align: center; }
.sep { flex: 0 0 18px; display: flex; justify-content: center; margin-top: -3px; height: 72px; }
.sep::before { content: ""; width: 2px; background: #6b4a50; }
.mini { flex-basis: 63px; margin: -4px 0 0 -4px; }
.mini svg { width: 63px; height: 62px; }
.trash { flex-basis: 54px; margin-top: -2px; }
.trash svg { width: 54px; height: 66px; }
```
